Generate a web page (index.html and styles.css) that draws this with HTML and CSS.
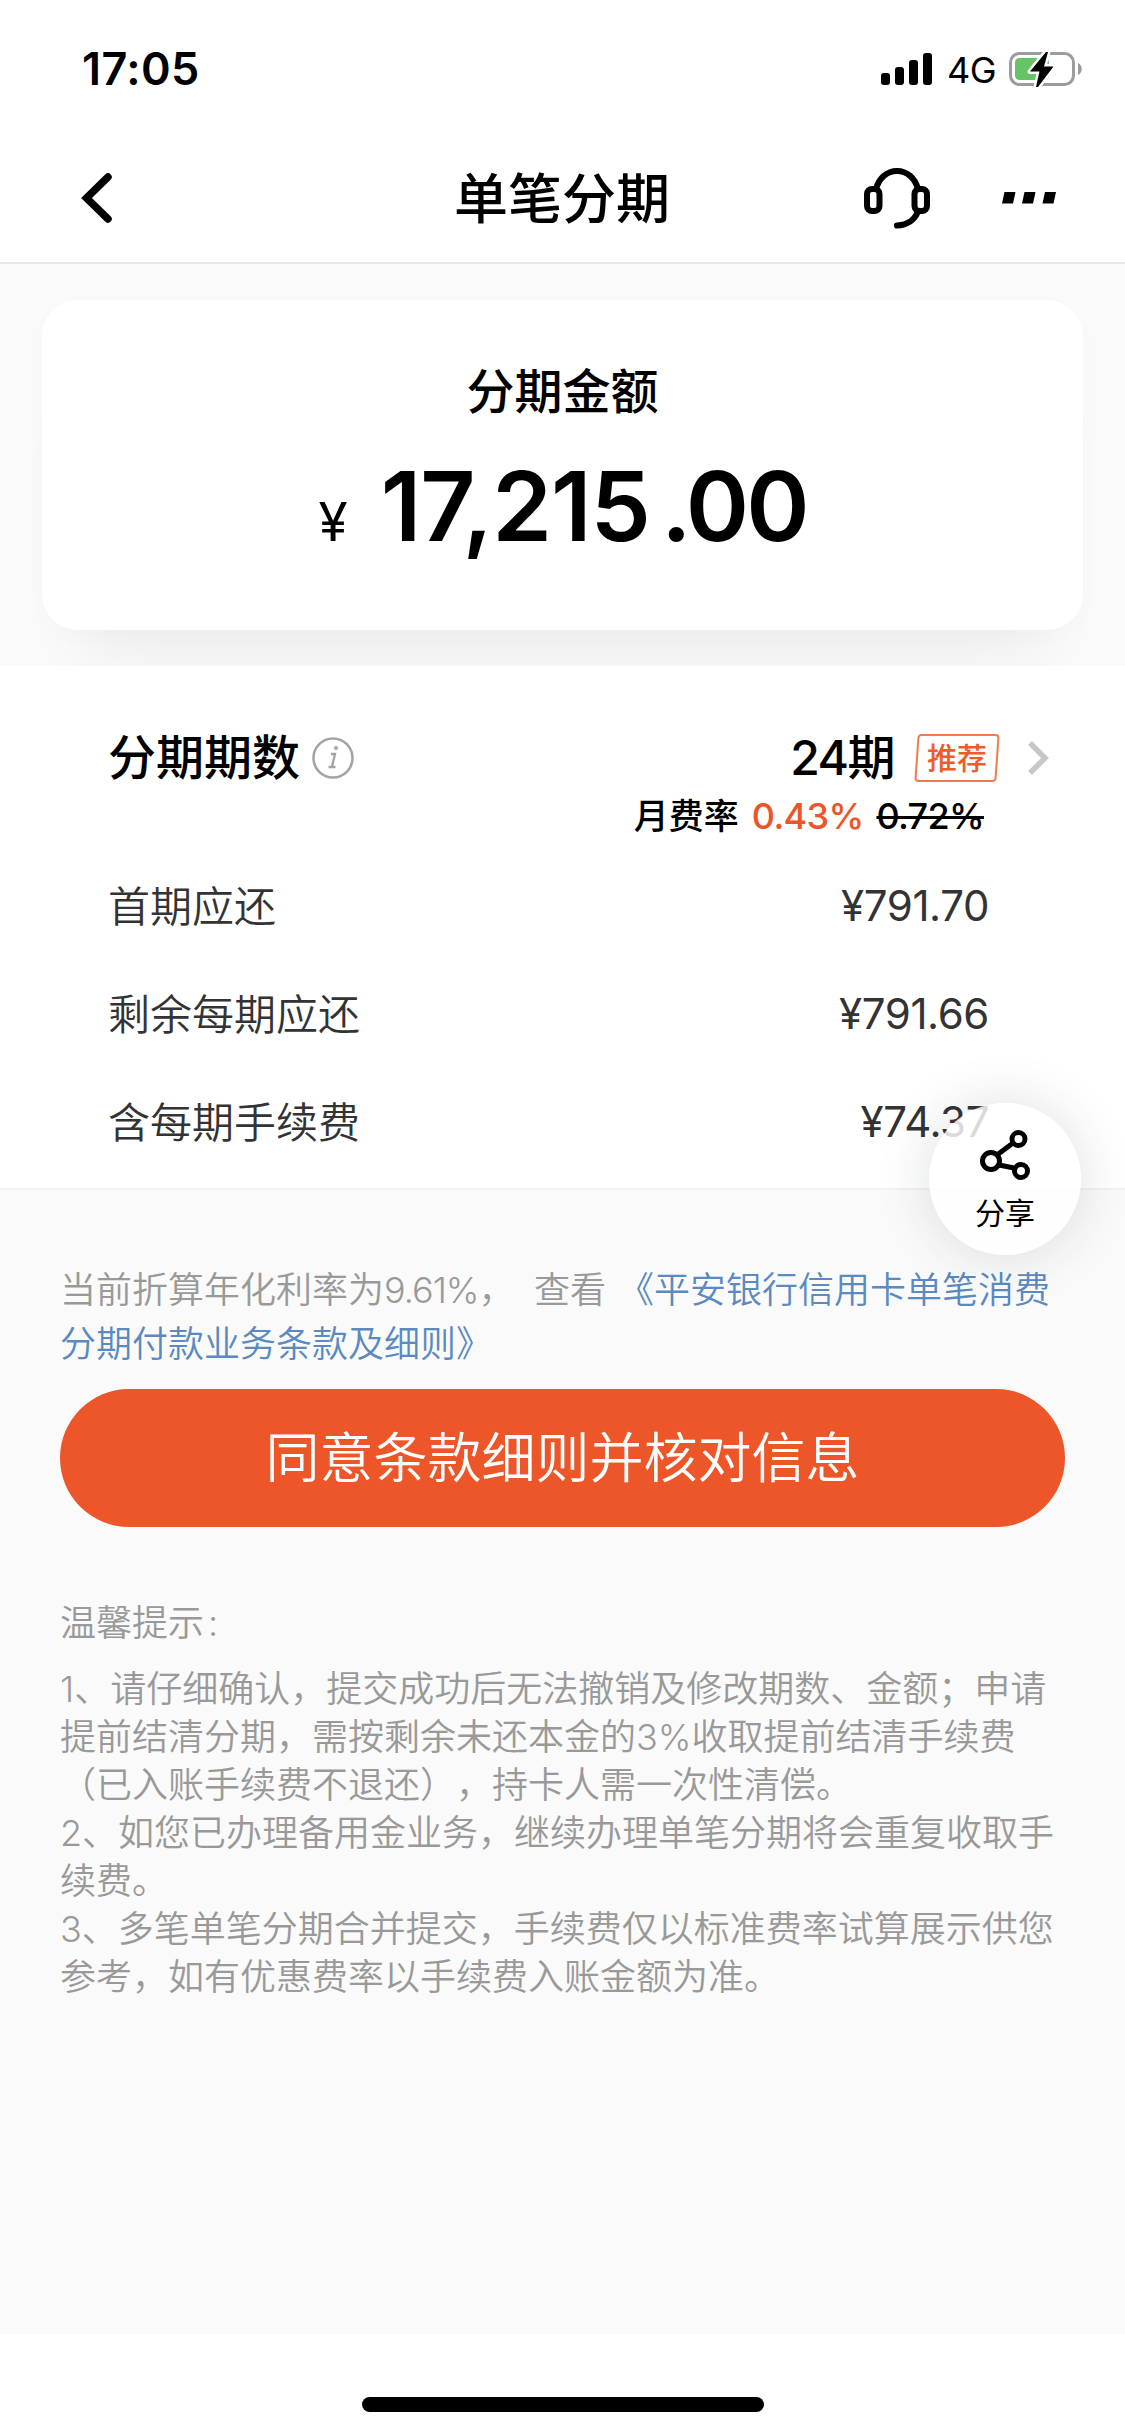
FILE: index.html
```html
<!DOCTYPE html>
<html lang="zh-CN">
<head>
<meta charset="utf-8">
<title>单笔分期</title>
<link rel="stylesheet" href="styles.css">
</head>
<body>
<div class="screen">
  <header class="top">
    <div class="status">
      <span class="clock">17:05</span>
      <div class="status-right">
        <svg class="signal" width="51" height="32" viewBox="0 0 51 32"><rect x="0" y="20" width="9" height="12" rx="3"/><rect x="14" y="14" width="9" height="18" rx="3"/><rect x="28" y="7" width="9" height="25" rx="3"/><rect x="42" y="0" width="9" height="32" rx="3"/></svg>
        <span class="network">4G</span>
        <svg class="battery" width="74" height="36" viewBox="0 0 74 36"><rect x="1.5" y="2.5" width="63" height="31" rx="9" fill="none" stroke="#9c9c9c" stroke-width="3"/><rect x="6" y="7" width="34" height="22" rx="4.500" fill="#65c466"/><path d="M69 12c5 2 5 10 0 12z" fill="#9c9c9c"/><path d="M37 1L21 20.500h9.500L27 36h2L44.500 15.500H35L39 1z" fill="#000" stroke="#fff" stroke-width="5" stroke-linejoin="round" paint-order="stroke"/></svg>
      </div>
    </div>
    <nav class="nav">
      <svg class="back" width="34" height="52" viewBox="0 0 34 52"><path d="M28 5L6.500 26L28 47" fill="none" stroke="#000" stroke-width="7.500" stroke-linecap="round" stroke-linejoin="miter"/></svg>
      <h1 class="title">单笔分期</h1>
      <div class="actions">
        <svg class="headset" width="66" height="61" viewBox="0 0 66 61"><g fill="none" stroke="#000" stroke-width="6" stroke-linecap="round"><path d="M12 21C15 10 23 3 33 3s18 7 21 18"/><rect x="3" y="21" width="12.500" height="22" rx="5"/><rect x="50.500" y="21" width="12.500" height="22" rx="5"/><path d="M54 43C51 52 43 57 33 57.500"/></g></svg>
        <svg class="more" width="54" height="12" viewBox="0 0 54 12"><path d="M2.500 0h11l-2.500 11.500H0zM22.500 0h11l-2.500 11.500H20zM43 0h11l-2.500 11.500H40.500z"/></svg>
      </div>
    </nav>
  </header>

  <section class="hero">
    <div class="card">
      <p class="card-label">分期金额</p>
      <p class="amount"><span class="yen">¥</span><span class="value">17,215<span class="cents">.00</span></span></p>
    </div>
  </section>

  <section class="plan">
    <div class="term">
      <div class="term-label">
        <span class="lift">分期期数</span>
        <svg width="44" height="44" viewBox="0 0 44 44"><circle cx="22" cy="22" r="19.500" fill="none" stroke="#a3a3a3" stroke-width="2.500"/><circle cx="25" cy="12" r="2" fill="#a3a3a3"/><path d="M20 18h4L21 30.500M17.500 31h7" fill="none" stroke="#a3a3a3" stroke-width="2.300"/></svg>
      </div>
      <div class="term-value">
        <span class="lift count">24期</span>
        <span class="tag"><span>推荐</span></span>
        <svg width="24" height="36" viewBox="0 0 24 36"><path d="M3 3L18 18L3 33" fill="none" stroke="#c7c7c7" stroke-width="5.500"/></svg>
      </div>
    </div>
    <p class="rate"><span>月费率</span><span class="rate-now">0.43%</span><s class="rate-old">0.72%</s></p>
    <dl class="fees">
      <div class="fee"><dt>首期应还</dt><dd>¥791.70</dd></div>
      <div class="fee"><dt>剩余每期应还</dt><dd>¥791.66</dd></div>
      <div class="fee"><dt>含每期手续费</dt><dd>¥74.37</dd></div>
    </dl>
  </section>

  <main class="body">
    <p class="agreement"><span class="annual">当前折算年化利率为<span class="num">9.61%</span>，</span><span class="look">查看</span><a class="terms">《平安银行信用卡单笔消费</a><br><a class="terms">分期付款业务条款及细则》</a></p>
    <button class="submit">同意条款细则并核对信息</button>
    <p class="tips-title">温馨提示<span class="colon">:</span></p>
    <div class="tips">
      <p>1、请仔细确认，提交成功后无法撤销及修改期数、金额；申请<br>提前结清分期，需按剩余未还本金的3%收取提前结清手续费<br>（已入账手续费不退还），持卡人需一次性清偿。</p>
      <p>2、如您已办理备用金业务，继续办理单笔分期将会重复收取手<br>续费。</p>
      <p>3、多笔单笔分期合并提交，手续费仅以标准费率试算展示供您<br>参考，如有优惠费率以手续费入账金额为准。</p>
    </div>
  </main>

  <footer class="home"><span class="home-bar"></span></footer>

  <span class="mark mark-1">P21082917051294980</span>
  <span class="mark mark-2">P21082917051294980</span>
  <span class="mark mark-3">P21082917051294980</span>
  <span class="mark mark-4">P21082917051294980</span>

  <button class="share">
    <svg width="52" height="52" viewBox="0 0 52 52"><g fill="none" stroke="#000" stroke-width="5"><path d="M18 26L34 14M20 36L35 39"/><circle cx="12" cy="32" r="8.500"/><circle cx="39.500" cy="10" r="6.500"/><circle cx="42" cy="42" r="6.500"/></g></svg>
    <span>分享</span>
  </button>
</div>
</body>
</html>
```
FILE: styles.css
```css
* { box-sizing: border-box; }
body, p, h1, dl, dd { margin: 0; }
body {
  font-family: Inter, "Noto Sans CJK SC", sans-serif;
  color: #000;
  background: #fafafa;
  text-spacing-trim: space-all;
  white-space: nowrap;
}
svg { display: block; flex: none; }
button { border: 0; padding: 0; font: inherit; }
.screen {
  position: relative;
  width: 1125px;
  height: 2436px;
  overflow: hidden;
  display: flex;
  flex-direction: column;
}

/* Status bar and navigation */
.top { height: 264px; background: #fff; border-bottom: 2px solid #e8e8e8; }
.status { height: 132px; padding: 6px 42px 0 82px; display: flex; align-items: center; justify-content: space-between; }
.clock { font-size: 45px; font-weight: 600; line-height: 60px; letter-spacing: .4px; }
.status-right { display: flex; align-items: center; }
.network { font-size: 36px; font-weight: 400; line-height: 40px; margin: 2px 13px 0 15px; letter-spacing: -.6px; }
.nav { height: 132px; padding: 0 69px 0 80px; display: grid; grid-template-columns: 1fr auto 1fr; align-items: center; }
.title { font-size: 54px; font-weight: 500; line-height: 80px; margin: 3px 0 0 -12px; }
.actions { display: flex; align-items: center; justify-content: flex-end; gap: 72px; }

/* Amount card */
.hero { height: 402px; padding: 36px 42px; overflow: hidden; }
.card {
  height: 330px;
  padding-top: 56px;
  border-radius: 36px;
  background: #fff;
  text-align: center;
  box-shadow: 0 60px 60px -40px rgba(0, 0, 0, .06), 0 6px 30px rgba(30, 50, 90, .015);
}
.card-label { font-size: 48px; font-weight: 500; line-height: 72px; }
.amount { display: flex; justify-content: center; align-items: baseline; gap: 33px; line-height: 116px; margin-top: 20px; }
.yen { font-size: 53px; font-weight: 400; }
.value { font-size: 96px; font-weight: 600; letter-spacing: -1px; }
.cents { margin-left: 11px; letter-spacing: -3px; }

/* Instalment plan */
.plan { height: 524px; padding: 56px 0 0 108px; background: #fff; border-bottom: 2px solid #f3f3f3; }
.term { height: 72px; padding-right: 74px; display: flex; justify-content: space-between; align-items: center; font-size: 48px; font-weight: 500; }
.term-label, .term-value { display: flex; align-items: center; }
.term-label { gap: 11px; }
.lift { padding-bottom: 8px; }
.count { letter-spacing: -1.5px; }
.tag { width: 82px; height: 48px; margin: 0 29px 0 22px; border: 2px solid #f07b50; border-radius: 4px; transform: skewX(-4deg); color: #ec5c2c; font-size: 30px; line-height: 44px; text-align: center; }
.tag span { display: inline-block; transform: skewX(4deg); }
.rate { display: flex; justify-content: flex-end; gap: 13px; padding-right: 141px; height: 42px; font-size: 35px; font-weight: 500; line-height: 44px; }
.rate-now, .rate-old { font-size: 36px; letter-spacing: -.7px; }
.rate-now { color: #ec5528; }
.rate-old { text-decoration-thickness: 3px; }
.fees { padding: 8px 136px 0 0; }
.fee { height: 108px; padding-top: 11px; display: flex; justify-content: space-between; align-items: center; font-size: 42px; color: #333; }
.fee dd { font-weight: 400; padding-top: 4px; letter-spacing: -.4px; }
.fee dt { font-weight: 350; }

/* Agreement, action and notes */
.body { flex: 1; padding: 73px 60px 0; color: #999; font-size: 36px; font-weight: 350; }
.agreement { line-height: 54px; height: 126px; }
.annual { display: inline-block; width: 474px; }
.num { letter-spacing: -1px; }
.look { display: inline-block; width: 84px; }
.terms { color: #5a8abf; }
.submit { display: block; width: 1005px; height: 138px; border-radius: 69px; background: #ec5629; color: #fff; font-size: 54px; font-weight: 350; line-height: 139px; text-align: center; }
.tips-title { margin-top: 69px; line-height: 54px; }
.colon { margin-left: 4px; }
.tips { margin-top: 15px; line-height: 48px; }
.home { height: 102px; background: #fff; display: flex; justify-content: center; padding-top: 63px; }
.home-bar { width: 402px; height: 15px; border-radius: 8px; background: #000; }

/* Faint serial numbers laid over the page */
.mark { position: absolute; left: 0; font-size: 42px; line-height: 50px; letter-spacing: 2.500px; color: rgba(40, 80, 40, .024); pointer-events: none; }
.mark-1 { top: 421px; }
.mark-2 { top: 781px; }
.mark-3 { top: 1321px; }
.mark-4 { top: 2071px; }

/* Floating share button */
.share {
  position: absolute;
  left: 929px;
  top: 1103px;
  width: 152px;
  height: 152px;
  border-radius: 50%;
  background: rgba(255, 255, 255, .82);
  box-shadow: 0 0 54px rgba(30, 40, 60, .15);
  display: flex;
  flex-direction: column;
  align-items: center;
  padding-top: 26px;
  font-size: 30px;
  line-height: 44px;
  color: #000;
}
.share span { margin-top: 10px; }
```
